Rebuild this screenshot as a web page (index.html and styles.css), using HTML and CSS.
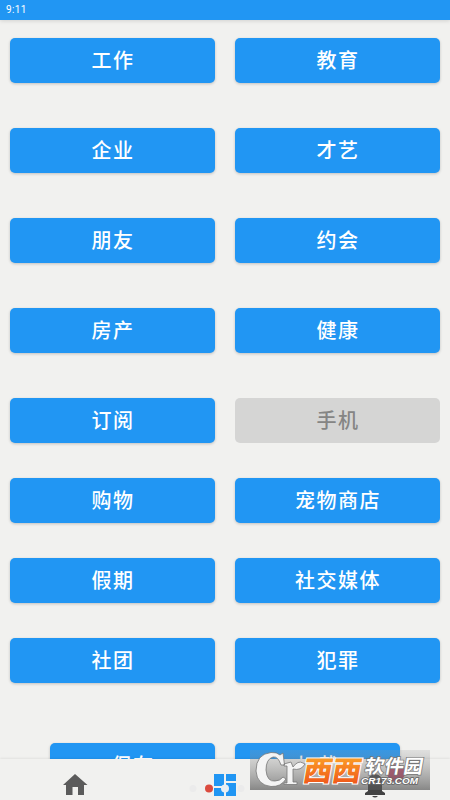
FILE: index.html
```html
<!DOCTYPE html>
<html lang="zh-CN">
<head>
<meta charset="utf-8">
<title>菜单</title>
<link rel="stylesheet" href="styles.css">
</head>
<body>
<div class="screen">
  <header class="status">9:11</header>
  <main class="content">
    <div class="grid wide">
      <button class="btn">工作</button><button class="btn">教育</button>
      <button class="btn">企业</button><button class="btn">才艺</button>
      <button class="btn">朋友</button><button class="btn">约会</button>
      <button class="btn">房产</button><button class="btn">健康</button>
      <button class="btn">订阅</button><button class="btn" disabled>手机</button>
    </div>
    <div class="grid tight">
      <button class="btn">购物</button><button class="btn">宠物商店</button>
      <button class="btn">假期</button><button class="btn">社交媒体</button>
      <button class="btn">社团</button><button class="btn">犯罪</button>
    </div>
    <div class="grid actions">
      <button class="btn">保存</button><button class="btn">加载</button>
    </div>
  </main>
  <nav class="nav">
    <svg class="nav-icons" width="450" height="41" viewBox="0 759 450 41">
      <path fill="#5b5b5b" d="M75 774L63 785H66V795H72.500V787H78V795H84V785H87.500Z"/>
      <circle cx="193" cy="788.500" r="3.500" fill="#ebebeb"/><circle cx="241" cy="788.500" r="3.500" fill="#ebebeb"/>
      <path fill="#2196f3" d="M214 774h10v12h-10zM226 774h10v7h-10zM214 788h10v8h-10zM226 783h10v13h-10z"/>
      <circle cx="209" cy="788.500" r="4" fill="#db4b3e"/><circle cx="225" cy="788.500" r="4" fill="#e7eef3"/>
      <path fill="#424242" d="M368 791V781Q368 775 375 774Q382 775 382 781V791L385 793V795H365V793ZM372 796H378Q375 799 372 796Z"/>
      <circle cx="396" cy="773" r="9" fill="#c2456a"/>
    </svg>
  </nav>
  <svg class="mark" width="180" height="40" viewBox="250 750 180 40">
    <defs>
      <linearGradient id="shade" x2="0" y2="1"><stop stop-color="#999" stop-opacity=".2"/><stop offset="1" stop-color="#555" stop-opacity=".68"/></linearGradient>
      <linearGradient id="fire" x2="0" y2="1"><stop stop-color="#ffb52b"/><stop offset="1" stop-color="#ed4b18"/></linearGradient>
    </defs>
    <path fill="url(#shade)" d="M250 750H430V790H250Z"/>
    <path fill="#f4f4f4" stroke="#777" stroke-width=".8" d="M283 753L284.500 765H281Q278 756 273 757Q266 759 266 770Q267 782 275 781Q280 781 283 777L286 779Q281 787 271 786.500Q257 785 256 771Q256 754 271 752.500Q277 752 280 755ZM284 764L291 762L293 767Q298 760 303 763L305 764Q301 771 293 769V782H297V784.500H284V783H287V766H284Z"/>
    <g class="brand">
      <text x="302" y="781" class="big" textLength="58" lengthAdjust="spacingAndGlyphs" transform="translate(137.500 0) skewX(-10)">西西</text>
      <text x="364" y="773.500" class="small" textLength="58" lengthAdjust="spacingAndGlyphs" transform="translate(136.500 0) skewX(-10)">软件园</text>
      <text x="361" y="783.500" class="url" textLength="57" lengthAdjust="spacingAndGlyphs">CR173.COM</text>
    </g>
  </svg>
</div>
</body>
</html>
```
FILE: styles.css
```css
* { box-sizing: border-box; }
body { margin: 0; background: #f1f1ef; font-family: Roboto, "Noto Sans CJK SC", sans-serif; }
.screen { position: relative; width: 450px; height: 800px; overflow: hidden; display: flex; flex-direction: column; }
.status { height: 20px; flex: none; padding-left: 6px; background: #2196f3; color: #fff; font-size: 10px; line-height: 19px; letter-spacing: .35px; box-shadow: 0 1px 4px #0002; }
.content { height: 739px; flex: none; overflow: hidden; padding: 17.500px 10px 0; }
.grid { display: grid; grid-template-columns: 1fr 1fr; column-gap: 20px; }
.wide { row-gap: 45px; }
.tight { row-gap: 35px; margin-top: 35px; }
.actions { margin: 60px 40px 0; }
.btn { height: 45px; padding: 2px 0 0 1px; border: 0; border-radius: 5px; background: #2196f3; color: #fff; font: 500 20px/43px Roboto, "Noto Sans CJK SC", sans-serif; letter-spacing: 1.500px; box-shadow: 0 1px 3px #0003; }
.btn:disabled { background: #d5d5d4; color: #858584; box-shadow: none; }
.nav { height: 41px; background: #f1f1ef; box-shadow: 0 -1px 2px #0001; position: relative; }
.nav-icons { display: block; }
.mark { position: absolute; left: 250px; top: 750px; }
.brand { font-family: "Noto Sans CJK SC", sans-serif; font-weight: 900; paint-order: stroke; }
.big { font-size: 28px; fill: url(#fire); stroke: #fff; stroke-width: 2px; }
.small { font-size: 19px; font-weight: 700; fill: #fff; stroke: #777; stroke-width: 1.500px; }
.url { font-family: "Liberation Sans", sans-serif; font-size: 9px; font-style: italic; font-weight: 700; fill: #fff; stroke: #666; stroke-width: 1.500px; }
```
